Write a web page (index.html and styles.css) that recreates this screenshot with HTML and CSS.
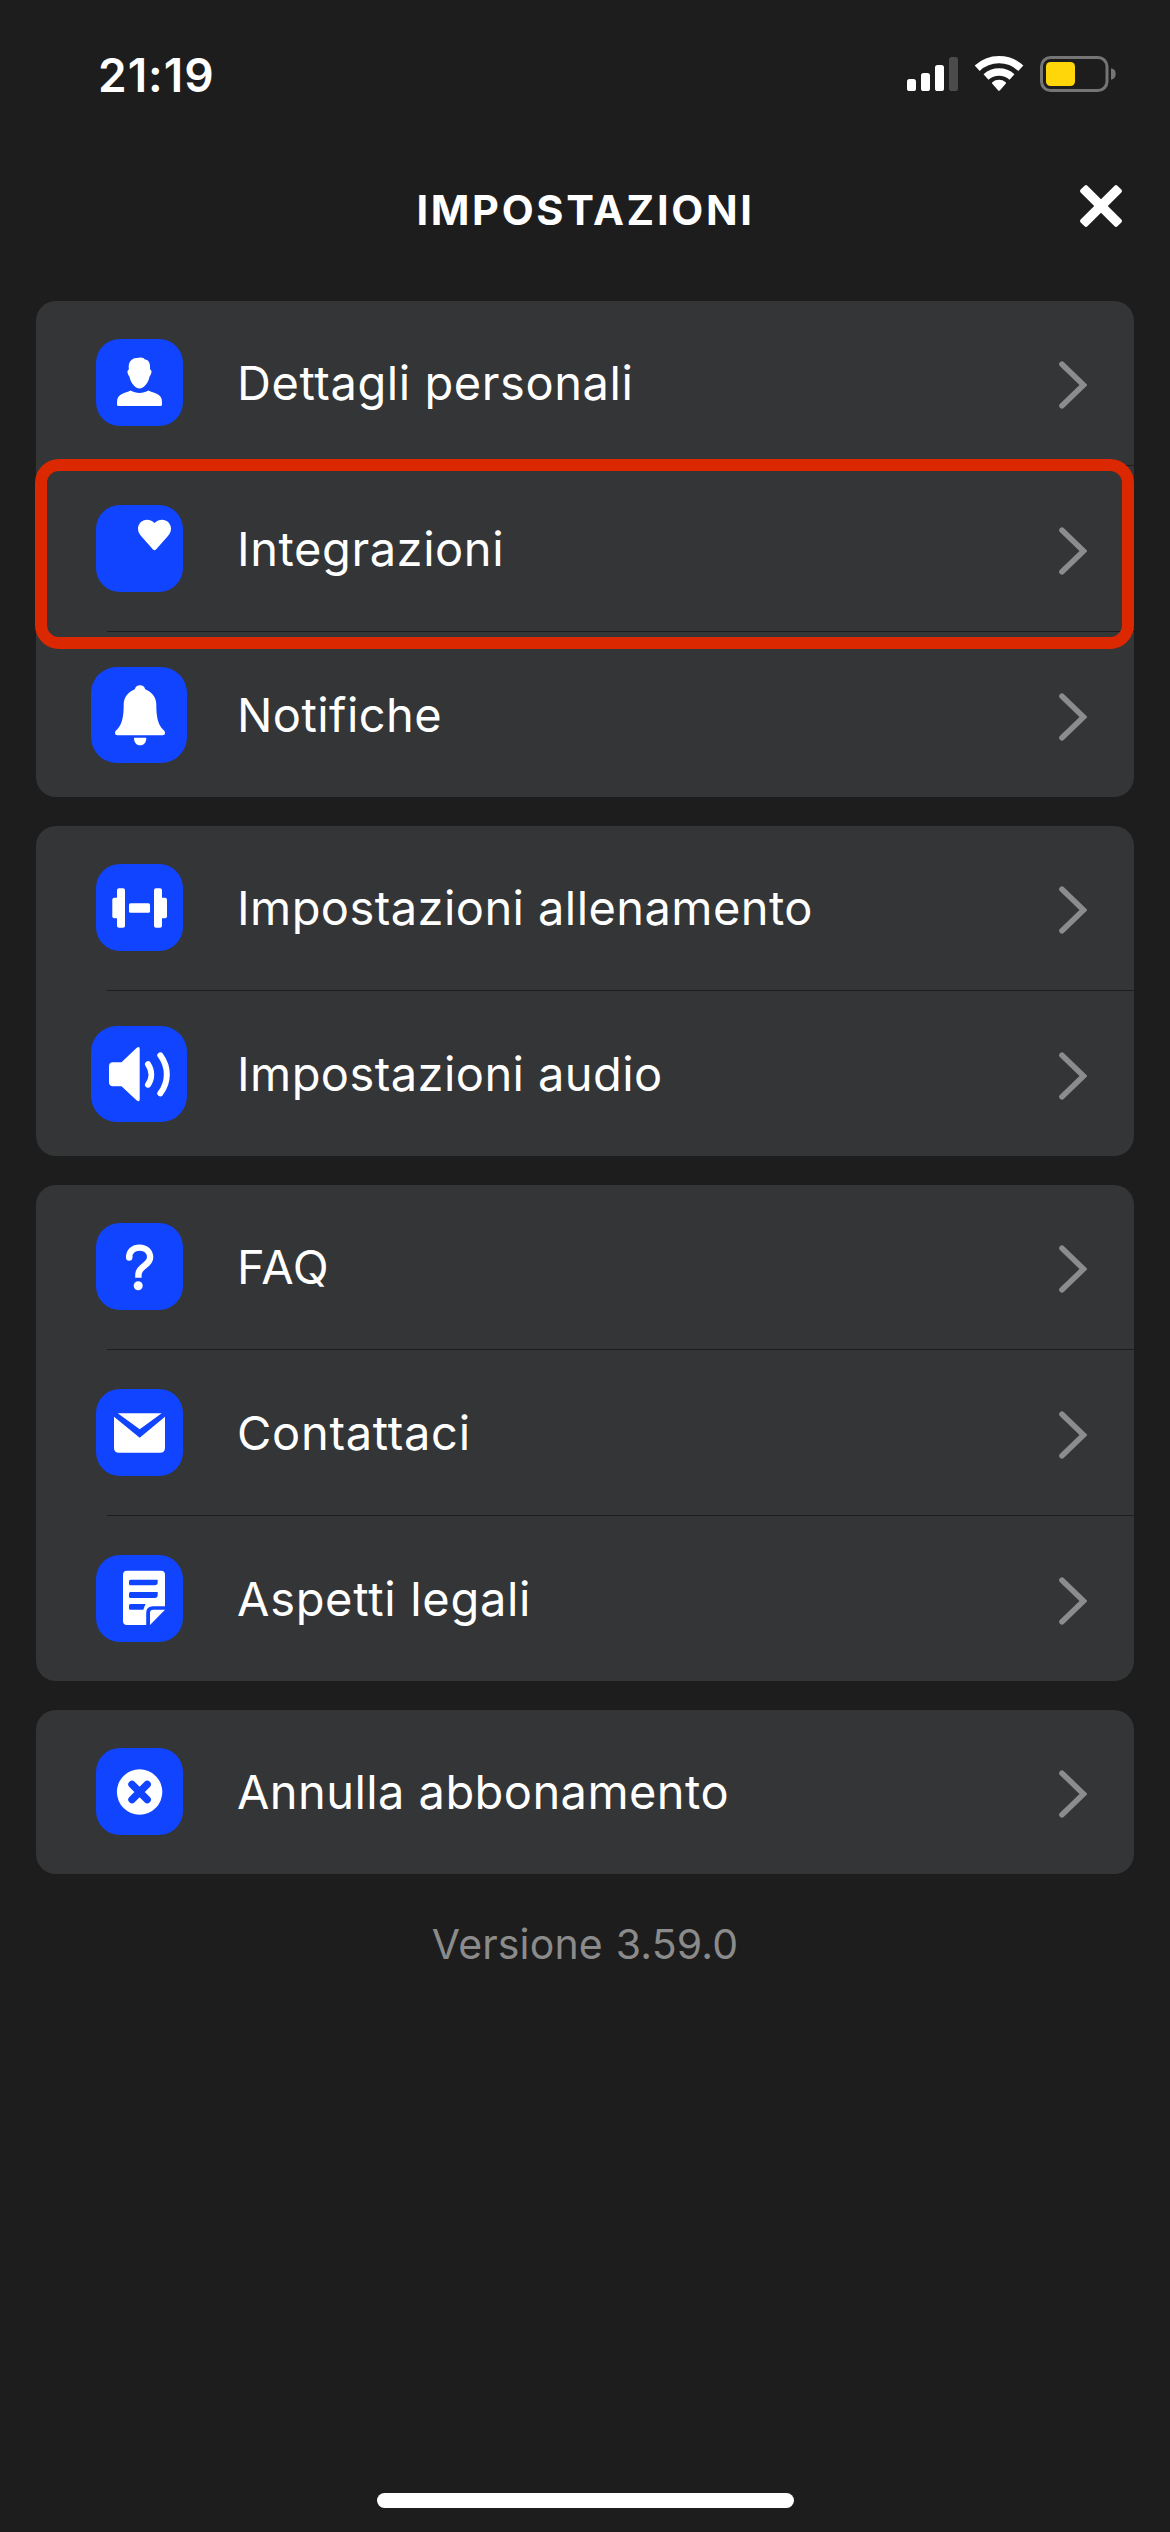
FILE: index.html
```html
<!DOCTYPE html>
<html lang="it">
<head>
<meta charset="utf-8">
<title>Impostazioni</title>
<link rel="stylesheet" href="styles.css">
</head>
<body>
<svg class="defs" aria-hidden="true">
  <symbol id="chevron" viewBox="0 0 28 48"><path d="M3 3.2 L24.5 24 L3 44.8" fill="none" stroke="#8c8c8d" stroke-width="5.6" stroke-linecap="round"/></symbol>
</svg>
<div class="screen">
  <header class="status">
    <span class="time">21:19</span>
    <svg class="indicators" width="210" height="40" viewBox="906 54 210 40">
      <g fill="#fff">
        <rect x="907" y="79" width="9" height="12" rx="2.6"/>
        <rect x="921" y="73" width="9" height="18" rx="2.6"/>
        <rect x="935" y="65" width="9" height="26" rx="2.6"/>
        <rect x="949" y="57" width="9" height="34" rx="2.6" fill="#4b4b4b"/>
        <path d="M999 82 m-6.7 .2 a10.5 10.5 0 0 1 13.4 0 q.8 .8 0 1.6 l-5.9 6.6 q-.8 .8 -1.6 0 l-5.9 -6.6 q-.8 -.8 0 -1.6z"/>
      </g>
      <g fill="none" stroke="#fff" stroke-width="7.4">
        <path d="M977.2 68.2 A32 32 0 0 1 1020.8 68.2"/>
        <path d="M986 77 A19.5 19.5 0 0 1 1012 77"/>
      </g>
      <rect x="1041.5" y="57.5" width="65.5" height="33" rx="9" fill="none" stroke="#757575" stroke-width="3"/>
      <rect x="1046" y="62" width="29" height="24" rx="4.5" fill="#ffd60a"/>
      <path d="M1111 68.3 a5.8 5.8 0 0 1 0 11.4z" fill="#757575"/>
    </svg>
  </header>
  <div class="titlebar">
    <h1 class="title">IMPOSTAZIONI</h1>
    <svg class="close" width="44" height="44" viewBox="-22 -22 44 44" fill="#fff">
      <rect x="-26" y="-4.8" width="52" height="9.6" rx="2" transform="rotate(45)"/>
      <rect x="-26" y="-4.8" width="52" height="9.6" rx="2" transform="rotate(-45)"/>
    </svg>
  </div>
  <main class="groups">
    <section class="card">
      <div class="row">
        <svg class="icon" viewBox="0 0 87 87"><rect width="87" height="87" rx="24" fill="#1144ff"/><path fill="#fff" d="M43 18.7 C46 18.2 48 19.2 49 20.5 C53 21 54.3 24 54.1 30.5 C56.3 31.500 55.800 34.500 53.600 37.500 C52.500 43.500 48 49.500 43.500 49.500 C39 49.500 34.500 43.500 33.400 37.500 C31.200 34.500 30.700 31.500 32.900 30.500 C32 23.500 34.500 18.700 43 18.700Z M34.500 51.500 C40 54.800 47 54.800 52.500 51.500 C57.500 54.500 66 54 66 63 V65.500 Q66 67 64.500 67 H22.500 Q21 67 21 65.500 V63 C21 54 29.500 54.500 34.500 51.500Z"/></svg>
        <span class="label">Dettagli personali</span>
        <svg class="chev"><use href="#chevron"/></svg>
      </div>
      <div class="row highlighted">
        <svg class="icon" viewBox="0 0 87 87"><rect width="87" height="87" rx="24" fill="#1144ff"/><path fill="#fff" d="M58.500 18 C61 15.500 63.500 14.700 66 14.700 C71 14.700 75 18.600 75 23.600 C75 27 73.500 29.500 71.500 31.500 L60 44.500 Q58.500 46 57 44.500 L45.500 31.500 C43.500 29.500 42 27 42 23.600 C42 18.600 46 14.700 51 14.700 C53.500 14.700 56 15.500 58.500 18Z"/></svg>
        <span class="label">Integrazioni</span>
        <svg class="chev"><use href="#chevron"/></svg>
      </div>
      <div class="row">
        <svg class="icon large" viewBox="0 0 96 96"><rect width="96" height="96" rx="26" fill="#1144ff"/><path fill="#fff" d="M49 18.300 C51.800 18.300 53.500 19.800 54.200 22.300 C61 25 65.300 30.500 65.300 37.500 C65.300 48 66.500 56 71 61.500 C72 62.700 74 63.800 74 65.800 Q74 68.300 71.500 68.300 H26.500 Q24 68.300 24 65.800 C24 63.800 26 62.700 27 61.500 C31.500 56 32.700 48 32.700 37.500 C32.700 30.500 37 25 43.800 22.300 C44.500 19.800 46.200 18.300 49 18.300Z M43 70.700 H55.300 C55.300 75.500 53 78.300 49.200 78.300 S43 75.500 43 70.700Z"/></svg>
        <span class="label tight">Notifiche</span>
        <svg class="chev"><use href="#chevron"/></svg>
      </div>
    </section>
    <section class="card">
      <div class="row">
        <svg class="icon" viewBox="0 0 87 87"><rect width="87" height="87" rx="24" fill="#1144ff"/><g fill="#fff"><rect x="16.300" y="33.700" width="9" height="20.600" rx="2"/><rect x="21" y="24.300" width="8" height="39.400" rx="2"/><rect x="33" y="39.300" width="21" height="9.400" rx="1.500"/><rect x="58" y="24.300" width="8" height="39.400" rx="2"/><rect x="62" y="33.700" width="9" height="20.600" rx="2"/></g></svg>
        <span class="label tight">Impostazioni allenamento</span>
        <svg class="chev"><use href="#chevron"/></svg>
      </div>
      <div class="row">
        <svg class="icon large" viewBox="0 0 96 96"><rect width="96" height="96" rx="26" fill="#1144ff"/><path fill="#fff" d="M22 36.300 H30.500 L45.500 22 Q48.700 19.500 48.700 23 V73.300 Q48.700 76.800 45.500 74.300 L30.500 60.300 H22 Q18 60.300 18 56.300 V40.300 Q18 36.300 22 36.300Z"/><path fill="none" stroke="#fff" stroke-width="6" stroke-linecap="round" d="M57 38.200 C61.300 44.500 61.300 52.500 57 58.700 M69.300 29.300 C78 41 78 56 69.300 67.300"/></svg>
        <span class="label tight">Impostazioni audio</span>
        <svg class="chev"><use href="#chevron"/></svg>
      </div>
    </section>
    <section class="card">
      <div class="row">
        <svg class="icon" viewBox="0 0 87 87"><rect width="87" height="87" rx="24" fill="#1144ff"/><circle cx="33.200" cy="34.500" r="3.200" fill="#fff"/><path fill="none" stroke="#fff" stroke-width="6.400" d="M33.200 34.500 C33.200 28 37.500 24.600 43.600 24.600 S54.100 28.500 54.100 34.500 C54.100 42.500 42.400 43 42.400 51.500 V54.700"/><circle cx="42.200" cy="62.700" r="4.500" fill="#fff"/></svg>
        <span class="label loose">FAQ</span>
        <svg class="chev"><use href="#chevron"/></svg>
      </div>
      <div class="row">
        <svg class="icon" viewBox="0 0 87 87"><rect width="87" height="87" rx="24" fill="#1144ff"/><path fill="#fff" d="M21.700 24.300 H65.700 L43.700 40.300Z M18 27.700 L43.700 48.700 L69 27.700 V58.700 Q69 63.700 64 63.700 H23 Q18 63.700 18 58.700Z"/></svg>
        <span class="label loose">Contattaci</span>
        <svg class="chev"><use href="#chevron"/></svg>
      </div>
      <div class="row">
        <svg class="icon" viewBox="0 0 87 87"><rect width="87" height="87" rx="24" fill="#1144ff"/><path fill="#fff" d="M31 15.700 H65 Q69 15.700 69 19.700 V51.300 H57 Q50.200 51.300 50.200 58 V70 H31 Q27 70 27 66 V19.700 Q27 15.700 31 15.700Z M69 54.700 L54 70 V58 Q54 54.700 57.300 54.700Z"/><path fill="#1144ff" d="M34.500 24.700 H61.700 V27.300 Q61.700 30.300 58.700 30.300 H34.500 Q33 30.300 33 28.800 V26.200 Q33 24.700 34.500 24.700Z M34.500 37 H61.700 V40 Q61.700 43 58.700 43 H34.500 Q33 43 33 41.500 V38.500 Q33 37 34.500 37Z M34.500 49 H49.500 L47.300 54.700 H34.500 Q33 54.700 33 53.200 V50.500 Q33 49 34.500 49Z"/></svg>
        <span class="label loose">Aspetti legali</span>
        <svg class="chev"><use href="#chevron"/></svg>
      </div>
    </section>
    <section class="card">
      <div class="row">
        <svg class="icon" viewBox="0 0 87 87"><rect width="87" height="87" rx="24" fill="#1144ff"/><circle cx="43.600" cy="44" r="22.700" fill="#fff"/><path stroke="#1144ff" stroke-width="7.400" stroke-linecap="round" d="M36 36.400 L51.200 51.600 M51.200 36.400 L36 51.600"/></svg>
        <span class="label tight">Annulla abbonamento</span>
        <svg class="chev"><use href="#chevron"/></svg>
      </div>
    </section>
  </main>
  <p class="version">Versione 3.59.0</p>
  <div class="home"></div>
</div>
</body>
</html>
```
FILE: styles.css
```css
*, *::before, *::after { box-sizing: border-box; }
body {
  margin: 0;
  background: #1d1d1d;
  color: #fff;
  font-family: Inter, "Liberation Sans", sans-serif;
}
.defs { position: absolute; width: 0; height: 0; }
.screen {
  width: 1170px;
  height: 2532px;
  display: flex;
  flex-direction: column;
}
.status {
  height: 150px;
  padding: 0 54px 0 98px;
  display: flex;
  justify-content: space-between;
}
.time {
  padding-top: 48px;
  font-size: 46px;
  line-height: 54px;
  font-weight: 600;
  letter-spacing: 1px;
}
.indicators { margin-top: 54px; }
.titlebar {
  height: 151px;
  padding: 34px 47px 0 0;
  display: grid;
  grid-template-columns: 1fr auto 1fr;
}
.title {
  grid-column: 2;
  margin: 0;
  padding-left: 48px;
  font-size: 41.5px;
  line-height: 52px;
  font-weight: 700;
  letter-spacing: 2.7px;
}
.close { grid-column: 3; justify-self: end; }
.groups {
  padding: 0 36px;
  display: flex;
  flex-direction: column;
  gap: 29px;
}
.card {
  background: #343536;
  border-radius: 20px;
  display: flex;
  flex-direction: column;
  gap: 2px;
}
.row {
  position: relative;
  height: 164px;
  padding: 0 47px 0 55px;
  display: grid;
  grid-template-columns: 96px 1fr 28px;
  align-items: center;
}
/* separator sits in the gap under each row and runs past the card edge */
.row:not(:last-child)::after {
  content: "";
  position: absolute;
  left: 71px;
  right: -2px;
  bottom: -1px;
  height: 1px;
  background: #1d1d1d;
}
.icon { width: 87px; height: 87px; margin-bottom: 1px; justify-self: center; }
.icon.large { width: 96px; height: 96px; margin-bottom: 0; }
.chev { width: 28px; height: 48px; margin-top: 4px; }
.label {
  padding-left: 50px;
  font-size: 47px;
  line-height: 60px;
  letter-spacing: 0.57px;
  white-space: nowrap;
}
.label.tight { letter-spacing: 0.43px; }
.label.loose { letter-spacing: 0.7px; }
.highlighted::before {
  content: "";
  position: absolute;
  z-index: 1;
  left: -1px;
  right: 0;
  top: -8px;
  height: 190px;
  border: 12.5px solid #dc2800;
  border-radius: 24px;
}
.version {
  margin: 45px 0 0;
  text-align: center;
  font-size: 41px;
  line-height: 50px;
  letter-spacing: 0.15px;
  word-spacing: 1.2px;
  color: #8b8b8b;
}
.home {
  width: 417px;
  height: 15px;
  margin: auto auto 24px 377px;
  border-radius: 8px;
  background: #fff;
}
```
